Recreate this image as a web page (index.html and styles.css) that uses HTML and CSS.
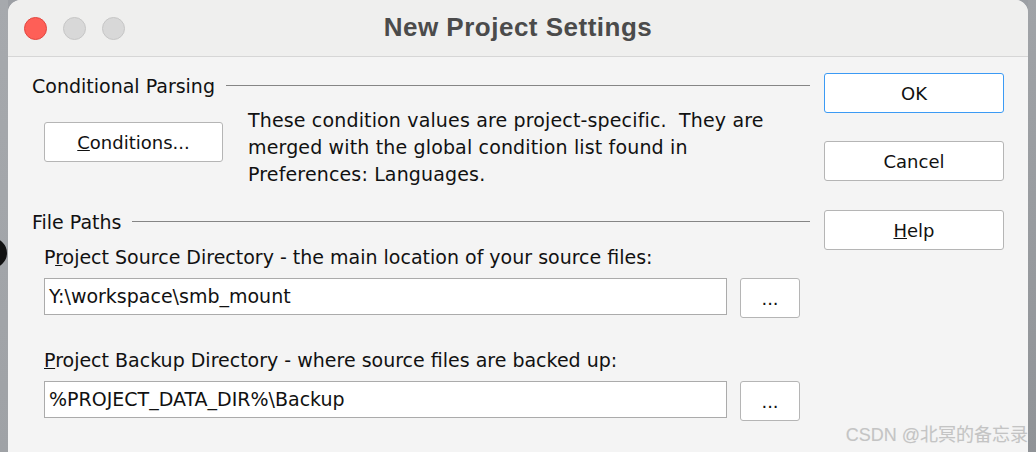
FILE: index.html
```html
<!DOCTYPE html>
<html>
<head>
<meta charset="utf-8">
<link rel="stylesheet" href="styles.css">
</head>
<body>
<div class="gutter left"><span class="clip-ring"></span></div>
<div class="window">
  <div class="titlebar">
    <div class="lights">
      <span class="light red"></span>
      <span class="light grey"></span>
      <span class="light grey"></span>
    </div>
    <div class="title">New Project Settings</div>
  </div>
  <div class="content">
    <div class="main">
      <div class="group-head"><span>Conditional Parsing</span><span class="rule"></span></div>
      <div class="cond-row">
        <button class="btn cond-btn"><u>C</u>onditions...</button>
        <p class="note">These condition values are project-specific.&nbsp;&nbsp;They are merged with the global condition list found in Preferences: Languages.</p>
      </div>
      <div class="group-head paths-head"><span>File Paths</span><span class="rule"></span></div>
      <div class="field">
        <div class="label">P<u>r</u>oject Source Directory - the main location of your source files:</div>
        <div class="input-row">
          <div class="input">Y:\workspace\smb_mount</div>
          <button class="btn browse">...</button>
        </div>
      </div>
      <div class="field second">
        <div class="label"><u>P</u>roject Backup Directory - where source files are backed up:</div>
        <div class="input-row">
          <div class="input">%PROJECT_DATA_DIR%\Backup</div>
          <button class="btn browse">...</button>
        </div>
      </div>
    </div>
    <div class="side">
      <button class="btn side-btn default">OK</button>
      <button class="btn side-btn">Cancel</button>
      <button class="btn side-btn help"><u>H</u>elp</button>
    </div>
  </div>
  <div class="watermark">CSDN @北冥的备忘录</div>
</div>
<div class="gutter right"></div>
</body>
</html>
```
FILE: styles.css
```css
html, body {
  margin: 0;
  padding: 0;
  height: 100%;
  overflow: hidden;
}
body {
  display: flex;
  background: #9c9fa4;
  font-family: "DejaVu Sans", "Noto Sans CJK SC", sans-serif;
}
.gutter {
  width: 8px;
  flex: none;
  overflow: hidden;
  position: relative;
}
.gutter.left {
  background: linear-gradient(#a6a9ad, #9fa2a6);
}
.gutter.right {
  background: linear-gradient(#a0a3a7, #909397);
}
.clip-ring {
  position: absolute;
  top: 238px;
  right: 1px;
  width: 30px;
  height: 30px;
  box-sizing: border-box;
  border: 8px solid #111;
  border-radius: 50%;
}
.window {
  flex: 1;
  position: relative;
  background: #f4f4f4;
  border-radius: 13px 13px 0 0;
  overflow: hidden;
}
.titlebar {
  height: 56px;
  background: #efefee;
  border-bottom: 1px solid #d6d6d6;
  display: flex;
  align-items: center;
  position: relative;
}
.lights {
  display: flex;
  gap: 16px;
  padding-left: 16px;
  padding-top: 1px;
}
.light {
  width: 23px;
  height: 23px;
  border-radius: 50%;
  box-sizing: border-box;
}
.light.red {
  background: #fe5f57;
  border: 1px solid #e2463f;
}
.light.grey {
  background: #d8d8d8;
  border: 1px solid #c6c6c6;
}
.title {
  position: absolute;
  left: 0;
  right: 0;
  top: 0;
  height: 56px;
  line-height: 54px;
  text-align: center;
  font-family: "Liberation Sans", Arial, sans-serif;
  font-weight: bold;
  font-size: 26px;
  letter-spacing: 0.5px;
  color: #4b4b4b;
  pointer-events: none;
}
.content {
  display: flex;
  gap: 14px;
  padding: 16px 0 0 24px;
  font-size: 19px;
  color: #111;
}
.main {
  width: 778px;
  flex: none;
}
.group-head {
  display: flex;
  align-items: center;
  height: 26px;
  gap: 11px;
  font-size: 19px;
}
.rule {
  flex: 1;
  height: 1px;
  background: #858585;
  margin-top: -1px;
}
.cond-row {
  display: flex;
  align-items: flex-start;
  gap: 25px;
  margin-top: 8px;
  padding-left: 12px;
}
.btn {
  font-family: "DejaVu Sans", sans-serif;
  font-size: 18px;
  color: #111;
  background: #fff;
  border: 1px solid #b5b5b5;
  border-radius: 3px;
  padding: 0;
  box-sizing: border-box;
}
.cond-btn {
  width: 179px;
  height: 40px;
  margin-top: 15px;
  flex: none;
}
.note {
  margin: 0;
  line-height: 27px;
  font-size: 19px;
  letter-spacing: 0.15px;
  width: 535px;
}
.paths-head {
  margin-top: 21px;
}
.field {
  padding-left: 12px;
  margin-top: 9px;
}
.field.second {
  margin-top: 29px;
}
.label {
  height: 26px;
  line-height: 26px;
  font-size: 19px;
}
.input-row {
  display: flex;
  gap: 13px;
  margin-top: 8px;
  align-items: flex-start;
}
.input {
  width: 683px;
  height: 37px;
  box-sizing: border-box;
  background: #fff;
  border: 1px solid #ababab;
  padding-left: 4px;
  line-height: 34px;
  font-size: 19px;
}
.browse {
  width: 60px;
  height: 40px;
  margin-top: 0;
}
.side {
  display: flex;
  flex-direction: column;
  gap: 28px;
}
.side-btn {
  width: 180px;
  height: 40px;
}
.side-btn.default {
  border-color: #3b9af4;
}
.side-btn.help {
  margin-top: 1px;
}
.watermark {
  position: absolute;
  right: 0;
  bottom: 6px;
  font-family: "Liberation Sans", "Noto Sans CJK SC", sans-serif;
  font-size: 18px;
  color: #c4c4c4;
  text-shadow: 0 0 1px #e8e8e8;
}
```
